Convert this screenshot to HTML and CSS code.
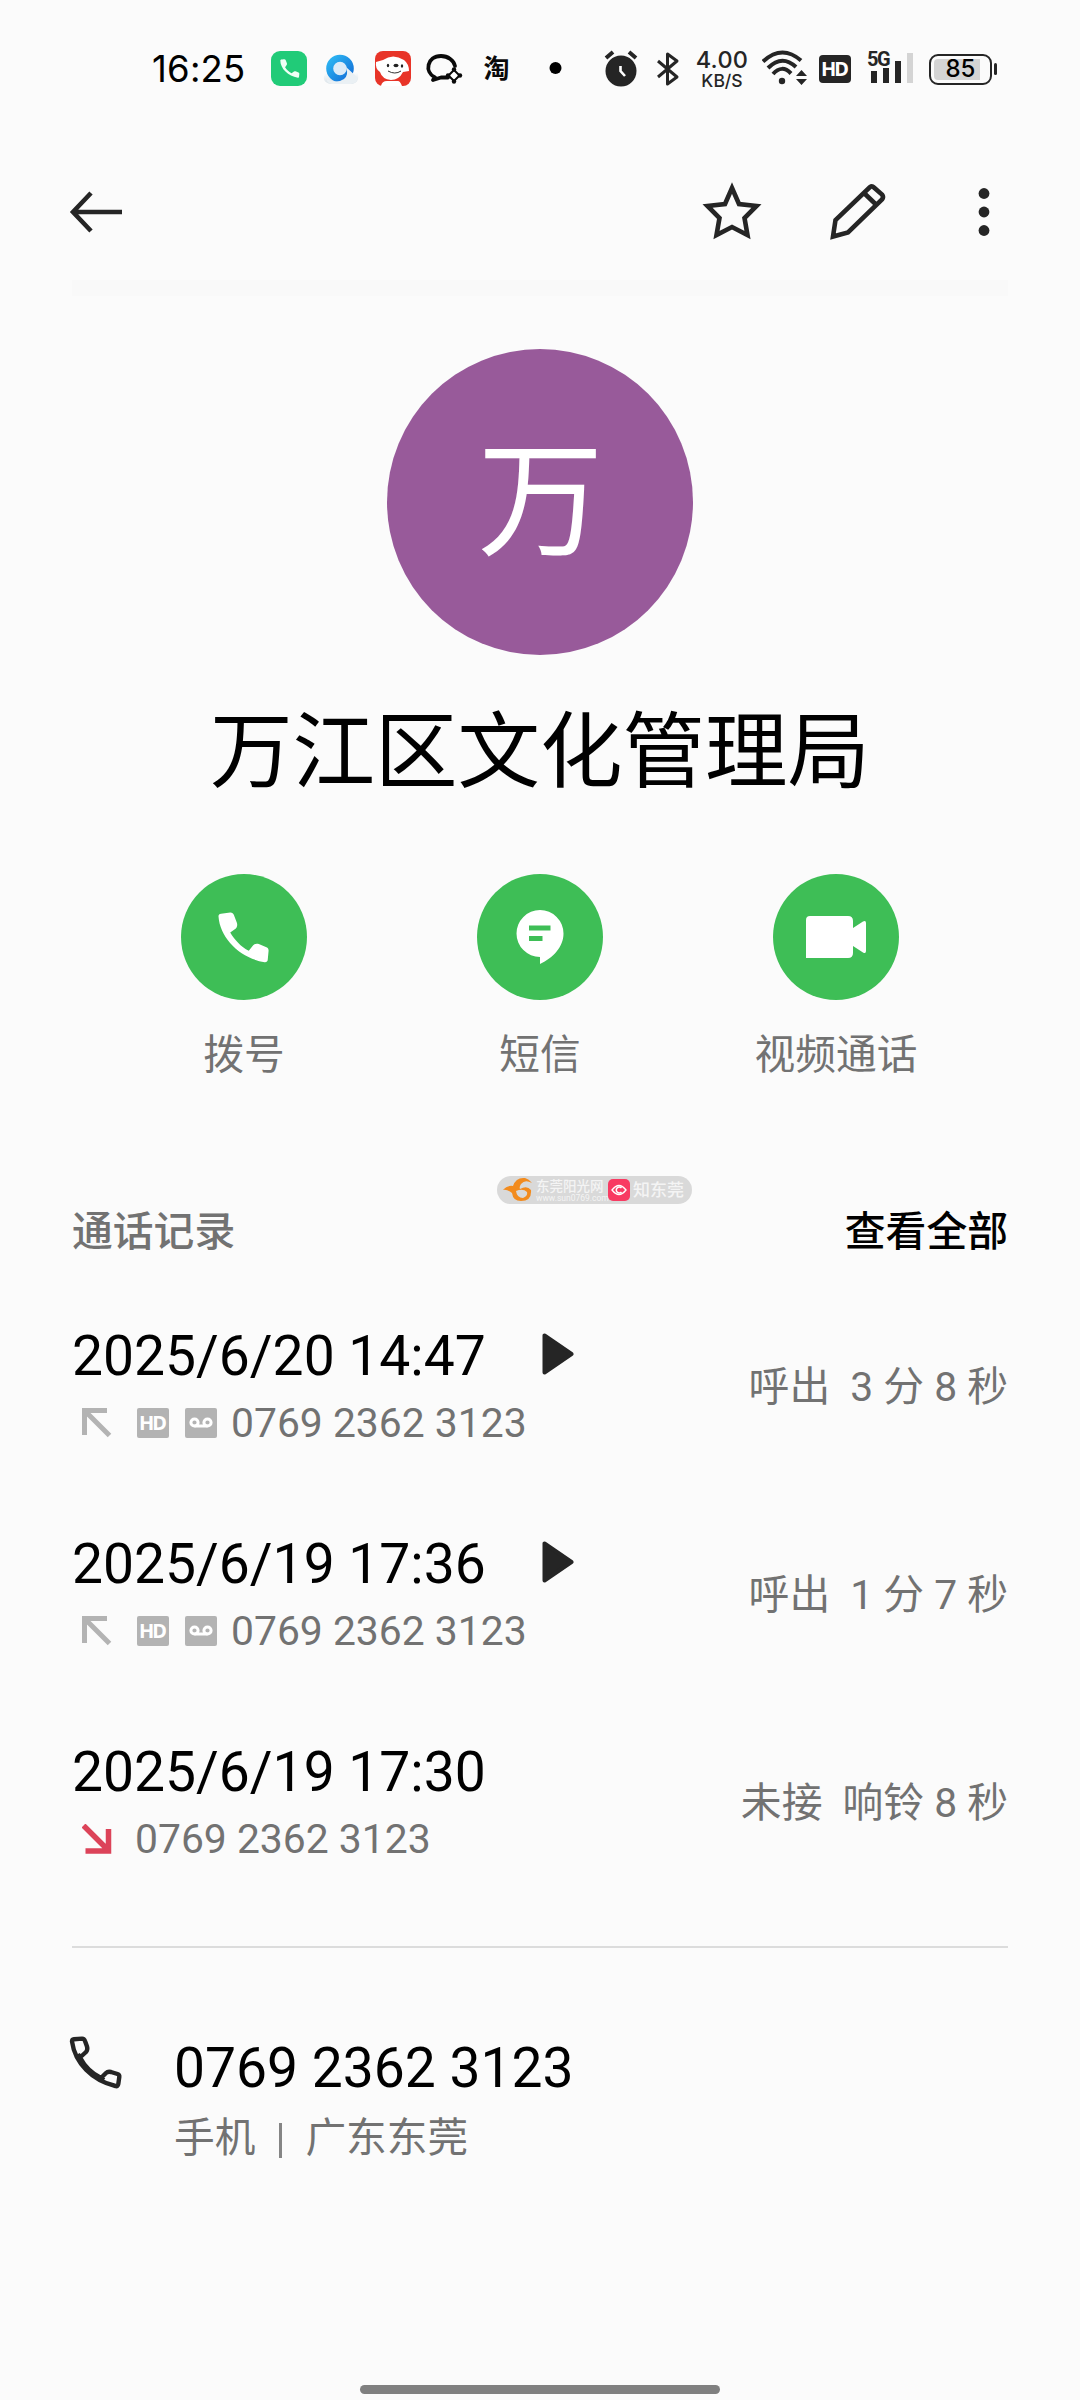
FILE: index.html
```html
<!DOCTYPE html>
<html lang="zh-CN">
<head>
<meta charset="utf-8">
<title>联系人</title>
<link rel="stylesheet" href="styles.css">
</head>
<body>
<svg class="defs" width="0" height="0">
  <defs>
    <symbol id="outgoing" viewBox="0 0 30 30"><path d="M2.500 27V2.500H25M3 3L27.500 27.500" fill="none" stroke="#b3b3b3" stroke-width="5"/></symbol>
    <symbol id="missed" viewBox="0 0 30 30"><path d="M1.500 1.500L26 26M3.500 27H26.500V5" fill="none" stroke="#dc4359" stroke-width="5.500"/></symbol>
    <symbol id="voicemail" viewBox="0 0 32 30"><rect width="32" height="30" rx="2" fill="#b3b3b3"/><g fill="none" stroke="#fff" stroke-width="3"><circle cx="9.500" cy="14.500" r="3.600"/><circle cx="22.500" cy="14.500" r="3.600"/><path d="M9.500 18H22.500"/></g></symbol>
    <symbol id="play" viewBox="0 0 32 42"><path d="M2.500 2.500V39.500L29.500 21Z" fill="#252525" stroke="#252525" stroke-width="4" stroke-linejoin="round"/></symbol>
    <symbol id="handset" viewBox="0 0 50 50"><path d="M.5 4.500C.4 2.800 1.300 2 3 1.700L12 .6C13.800 .5 15 1.500 15.600 3L18.500 10.500C19.200 12.500 18.800 14.600 17.500 16.200L12 20C16 27 22.500 34 30.200 38L34.500 32.500C36 31 38 30.700 40 31.300L47.500 34.500C49 35.200 49.700 36.400 49.600 38L48.800 46.500C48.700 48.300 47.500 49.400 45.700 49.200C22 45.500 2 26 .5 4.500Z"/></symbol>
  </defs>
</svg>
<div class="screen">
  <header class="status">
    <span class="clock">16:25</span>
    <svg class="tray" width="330" height="44" viewBox="0 0 330 44">
      <defs>
        <linearGradient id="ring" x1="0" y1="0" x2="1" y2="1"><stop offset="0" stop-color="#2cb5f2"/><stop offset="1" stop-color="#1470d8"/></linearGradient>
        <linearGradient id="cloud" x1="0" y1="0" x2="0" y2="1"><stop offset="0" stop-color="#fff"/><stop offset="1" stop-color="#d9e2e8"/></linearGradient>
      </defs>
      <rect x="1" y="5" width="36" height="35" rx="9" fill="#21cb78"/>
      <g fill="#effff6" transform="translate(9.500 13) scale(.4 .38)"><path d="M2 3.500C2 1.500 5 1 10 .6C13 .5 15 1.500 15.600 3L18.500 11C19.200 13 18.800 14.600 17.500 16.200L14 22C17.500 28 23 33.700 30.200 37.500L34.500 34C36 32 38 31.700 40 32.300L47.500 35.500C49 36.200 49.700 37.400 49.600 39L48.800 46.500C48.700 48.300 47.500 49.400 45.700 49.200C22 45.500 2 26 2 3.500Z"/></g>
      <path d="M56 26Q50 36 61 38H82Q91 36 87 25Z" fill="url(#cloud)"/>
      <circle cx="70" cy="22.500" r="10.300" fill="#dcebf8" stroke="url(#ring)" stroke-width="7"/>
      <path d="M57 33Q66 38 74 33Q79 29 76 21L87 31Q88 37 81 38H62Q56 37 57 33Z" fill="#eaf0f4"/>
      <rect x="105" y="5" width="36" height="35" rx="8" fill="#e83428"/>
      <path d="M106 16L113 14Q123 7 134 14Q139 18 139 25L133 26Q129 34 121 34Q112 33 110 26Q105 23 106 16ZM111 40Q112 35 117 35H128Q130 35 132 40Z" fill="#fff"/>
      <ellipse cx="126" cy="19.500" rx="2.500" ry="1.700" fill="#222"/><ellipse cx="118" cy="19.500" rx="1.200" ry="1.800" fill="#222"/><ellipse cx="132" cy="20" rx="1.200" ry="1.800" fill="#222"/>
      <path d="M118 25Q125 29 131 25" fill="none" stroke="#333" stroke-width="1"/>
      <path d="M165 31.500C154 26 157 10 171 10C178 10 184 14.500 185 20M165 31.500L163 34L171 31.500H178" fill="none" stroke="#0a0a0a" stroke-width="3.800" stroke-linecap="round" stroke-linejoin="round"/>
      <path d="M184 24L189.500 29.500L184 35L178.500 29.500Z" fill="#fff" stroke="#0a0a0a" stroke-width="2"/>
      <g fill="#0a0a0a"><circle cx="184" cy="23.500" r="2.200"/><circle cx="184" cy="35.500" r="2.200"/><circle cx="178" cy="29.500" r="2.200"/><circle cx="190" cy="29.500" r="2.200"/></g>
      <text class="tao" x="213.500" y="31.500">淘</text>
      <circle cx="285.500" cy="22" r="6" fill="#000"/>
    </svg>
    <svg class="alarm" width="36" height="40" viewBox="0 0 36 40"><circle cx="18" cy="22" r="15.500" fill="#252525"/><path d="M3 9L10 3M33 9L26 3" stroke="#252525" stroke-width="4"/><path d="M17.500 17V22L22 27" fill="none" stroke="#fff" stroke-width="2.600"/></svg>
    <svg class="bt" width="24" height="36" viewBox="0 0 24 36"><path d="M2 10L21 26L11.500 33V3L21 10L2 26" fill="none" stroke="#252525" stroke-width="3" stroke-linejoin="round"/></svg>
    <span class="speed"><b>4.00</b><i>KB/S</i></span>
    <svg class="wifi" width="46" height="36" viewBox="0 0 46 36"><g fill="none" stroke="#252525" stroke-width="4"><path d="M1 11.500Q20-6 39 10.500"/><path d="M6 18Q20 4 34 17"/><path d="M11 24Q20 14 29 23.500"/></g><circle cx="20" cy="31" r="3.200" fill="#252525"/><path d="M34 26L39.500 20L45 26ZM34 29L39.500 35L45 29Z" fill="#252525"/></svg>
    <span class="hd">HD</span>
    <span class="signal"><em>5G</em><svg width="43" height="32" viewBox="0 0 43 32"><path d="M0 20H6V32H0ZM12 17H18V32H12ZM24 10H30V32H24Z" fill="#252525"/><path d="M36 2H42V32H36Z" fill="#d4d4d4"/></svg></span>
    <span class="battery">85</span>
  </header>

  <nav class="appbar">
    <svg width="54" height="44" viewBox="0 0 54 44"><path d="M22 3L4 22L22 41M4 22H53" fill="none" stroke="#252525" stroke-width="4.600"/></svg>
    <span class="tools">
      <svg width="60" height="60" viewBox="0 0 60 60"><path d="M30 6L37 22L54.500 24L42.500 36L45.500 53L30 45L14.500 53L17.500 36L5.500 24L23 22Z" fill="none" stroke="#252525" stroke-width="4.600"/></svg>
      <svg width="60" height="60" viewBox="0 0 60 60"><path d="M5 54.500L7.500 38L42 5Q44 3.500 46 5.500L54 12.500Q56 15 54 17.500L20 50.500Z M36 11L48.500 23" fill="none" stroke="#252525" stroke-width="4.600"/></svg>
      <svg width="12" height="48" viewBox="0 0 12 48"><g fill="#252525"><circle cx="6" cy="5.500" r="5.400"/><circle cx="6" cy="24" r="5.400"/><circle cx="6" cy="42.500" r="5.400"/></g></svg>
    </span>
  </nav>
  <div class="band"></div>

  <section class="profile">
    <div class="avatar">万</div>
    <h1>万江区文化管理局</h1>
    <div class="actions">
      <div class="action"><span class="round"><svg class="dial" width="51" height="51" viewBox="0 0 50 50" fill="#fff"><use href="#handset" width="50" height="50"/></svg></span>拨号</div>
      <div class="action"><span class="round"><svg width="48" height="54" viewBox="0 0 48 54"><path d="M24 0A23.500 23.500 0 0 1 47.500 23.500C47.500 37 37 48 24 54V47A23.500 23.500 0 0 1 24 0Z" fill="#fff"/><path d="M13 15.500H34.500V20.500H13ZM13 26H26.500V31H13Z" fill="#3ebe56"/></svg></span>短信</div>
      <div class="action"><span class="round"><svg width="60" height="42" viewBox="0 0 60 42"><path d="M4 0H42Q47 0 47 5V12L57 5.500Q60 4 60 7V35Q60 38 57 36.500L47 30V37Q47 42 42 42H0V4Q0 0 4 0Z" fill="#fff"/></svg></span>视频通话</div>
    </div>
  </section>

  <section class="log">
    <div class="mark">
      <svg width="30" height="26" viewBox="0 0 30 26"><path d="M0 13Q4 8 10 9Q13 0 22 1Q26 2 29 6Q22 2 18 7Q16 10 17 12Q24 8 28 13Q29 24 18 24Q10 24 9 16Q4 12 0 13ZM13 14Q14 21 20 21Q25 19 24 15Q20 11 13 14Z" fill="#f28b1e" fill-rule="evenodd"/></svg>
      <span class="site"><b>东莞阳光网</b><i>www.sun0769.com</i></span>
      <svg width="22" height="22" viewBox="0 0 22 22"><rect width="22" height="22" rx="5" fill="#f83a62"/><path d="M4 11Q11 2 18 11Q11 20 4 11Z" fill="none" stroke="#fff" stroke-width="1.300"/><path d="M13.500 9A3 3 0 1 0 13.500 13" fill="none" stroke="#fff" stroke-width="1.500"/></svg>
      <b class="know">知东莞</b>
    </div>
    <div class="loghead"><h2>通话记录</h2><a>查看全部</a></div>
    <div class="row">
      <div class="what"><div class="date">2025/6/20 14:47<svg width="32" height="42"><use href="#play"/></svg></div>
        <div class="num"><svg width="30" height="30"><use href="#outgoing"/></svg><span class="tag">HD</span><svg class="vm" width="32" height="30"><use href="#voicemail"/></svg>0769 2362 3123</div></div>
      <div class="dur"><span>呼出</span><span>3 分 8 秒</span></div>
    </div>
    <div class="row">
      <div class="what"><div class="date">2025/6/19 17:36<svg width="32" height="42"><use href="#play"/></svg></div>
        <div class="num"><svg width="30" height="30"><use href="#outgoing"/></svg><span class="tag">HD</span><svg class="vm" width="32" height="30"><use href="#voicemail"/></svg>0769 2362 3123</div></div>
      <div class="dur"><span>呼出</span><span>1 分 7 秒</span></div>
    </div>
    <div class="row">
      <div class="what"><div class="date">2025/6/19 17:30</div>
        <div class="num"><svg class="miss" width="30" height="30"><use href="#missed"/></svg>0769 2362 3123</div></div>
      <div class="dur"><span>未接</span><span>响铃 8 秒</span></div>
    </div>
  </section>

  <section class="contact">
    <svg width="54" height="54" viewBox="-1 -2 54 54"><path d="M2 4.500C2 3 2.500 2.500 4 2.300L12 1.600C13.800 1.500 14.500 2.500 15 4L17 9.500C17.600 11.500 17.300 13.500 16 15L10 20.500C15 30 22 36.500 31 41L36 36C37.500 34.500 39 34.500 41 35L47.500 37C49 37.500 49.500 38.500 49.300 40L48.300 47C48 49 47 49.500 45.500 49C22 43.500 5 26 2 4.500ZM10 20.500L8 17M31 41L34 43" fill="none" stroke="#252525" stroke-width="4.400" stroke-linejoin="round"/></svg>
    <div><div class="phone">0769 2362 3123</div><div class="place"><span>手机</span><span class="bar"></span><span>广东东莞</span></div></div>
  </section>
  <div class="gesture"></div>
</div>
</body>
</html>
```
FILE: styles.css
```css
* { box-sizing: border-box; }
body { margin: 0; background: #fbfbfb; font-family: Roboto, "Noto Sans CJK SC", sans-serif; color: #000; }
svg { display: block; flex: none; }
.defs { position: absolute; }
h1, h2 { margin: 0; font-weight: 400; }
.screen { width: 1080px; height: 2400px; display: flex; flex-direction: column; overflow: hidden; }

.status { height: 136px; padding-left: 151px; display: flex; align-items: center; color: #252525; flex: none; }
.clock { width: 119px; padding: 2px 0 0 1px; font: 400 36.500px/44px Inter, sans-serif; color: #000; letter-spacing: .2px; }
.tray { width: 330px; }
.tao { font: 700 26px "Noto Sans CJK SC", sans-serif; fill: #0a0a0a; }
.alarm { margin: 1px 0 0 3px; }
.bt { margin: 2px 0 0 17px; }
.speed { width: 54px; margin: 3px 0 0 15px; display: flex; flex-direction: column; align-items: center; font-family: Inter, sans-serif; white-space: nowrap; }
.speed b { font-size: 23.500px; line-height: 22px; font-weight: 500; letter-spacing: .3px; }
.speed i { font-size: 17.500px; line-height: 19px; font-style: normal; font-weight: 500; }
.wifi { margin-left: 13px; }
.hd { width: 32px; height: 28px; margin: 2px 0 0 11px; border-radius: 4px; background: #252525; color: #fff; font: 700 20px/28px "Noto Sans", sans-serif; text-align: center; letter-spacing: -2px; padding-right: 2px; }
.signal { width: 48px; height: 36px; margin: 0 0 0 16px; display: grid; }
.signal em { grid-area: 1 / 1; font: 700 20px/18px Roboto, sans-serif; letter-spacing: -1.500px; }
.signal svg { grid-area: 1 / 1; margin: 1px 0 0 4px; }
.battery { position: relative; width: 63px; height: 31px; margin: 2px 0 0 14px; border: 2.500px solid #252525; border-radius: 9px; background: linear-gradient(90deg, #d4d4d4 46px, #fbfbfb 46px) content-box; padding: 3px; font: 500 24px/20px Inter, sans-serif; text-align: center; color: #000; }
.battery::after { content: ""; position: absolute; right: -7px; top: 7px; width: 3px; height: 12px; background: #252525; border-radius: 2px; }

.appbar { height: 144px; padding: 8px 90px 0 69px; display: flex; align-items: center; justify-content: space-between; flex: none; }
.tools { display: flex; align-items: center; gap: 66px; }
.tools svg:last-child { margin-left: 24px; }
.band { height: 16px; margin: 0 72px; background: #f9f9f9; flex: none; }

.profile { padding-top: 53px; display: flex; flex-direction: column; align-items: center; flex: none; }
.avatar { width: 306px; height: 306px; padding: 2px 0 0 1px; border-radius: 50%; background: #985a9a; color: #fff; font-size: 126px; line-height: 304px; text-align: center; font-weight: 400; }
h1 { margin-top: 48px; font-size: 82.500px; line-height: 100px; }
.actions { margin-top: 71px; width: 888px; display: grid; grid-template-columns: repeat(3, 1fr); }
.action { display: flex; flex-direction: column; align-items: center; gap: 25px; font-size: 40.700px; line-height: 60px; color: #727272; }
.round { width: 126px; height: 126px; border-radius: 50%; background: #3ebe56; display: grid; place-items: center; }
.dial { margin-right: 1px; }

.log { position: relative; margin: 0 72px; height: 863px; border-bottom: 2px solid #dcdcdc; padding-top: 117px; flex: none; }
.mark { position: absolute; left: 425px; top: 91px; width: 195px; height: 28px; border-radius: 14px; background: #d9d9d9; display: flex; align-items: center; padding-left: 6px; gap: 3px; color: #f4f4f4; white-space: nowrap; }
.site { width: 69px; }
.site b { display: block; font-size: 13.500px; line-height: 15px; font-weight: 500; }
.site i { display: block; font-size: 8.500px; line-height: 8px; font-style: normal; }
.mark .know { font-size: 17px; line-height: 24px; font-weight: 500; }
.loghead { display: flex; justify-content: space-between; height: 60px; font-size: 40.800px; line-height: 60px; font-weight: 500; }
h2 { font: inherit; color: #727272; }
.row { height: 208px; display: flex; justify-content: space-between; }
.what { padding-top: 61px; }
.date { display: flex; align-items: center; gap: 56px; font-size: 55.200px; line-height: 66px; height: 66px; white-space: nowrap; }
.date svg { margin-bottom: 5px; }
.num { display: flex; align-items: center; height: 66px; margin-top: 1px; padding-left: 10px; font-size: 40.850px; line-height: 66px; color: #727272; }
.tag { width: 32px; height: 30px; margin: 0 16px 0 25px; padding-right: 2px; border-radius: 2px; background: #b3b3b3; color: #fff; font: 700 20px/30px "Noto Sans", sans-serif; text-align: center; letter-spacing: -2px; }
.vm { margin-right: 14px; }
.miss { margin-right: 23px; }
.dur { padding-top: 95px; display: flex; gap: 20px; font-size: 40.800px; line-height: 60px; color: #727272; white-space: nowrap; }

.contact { margin: 87px 70px 0 69px; display: flex; gap: 51px; flex: none; }
.phone { font-size: 55.200px; line-height: 66px; }
.place { display: flex; align-items: center; margin-top: 7px; font-size: 40.700px; line-height: 60px; color: #727272; }
.bar { width: 3px; height: 35px; margin: 4px 23px 0 24px; background: #858585; }
.gesture { width: 360px; height: 9px; margin: auto auto 6px; border-radius: 5px; background: #808080; flex: none; }
```
